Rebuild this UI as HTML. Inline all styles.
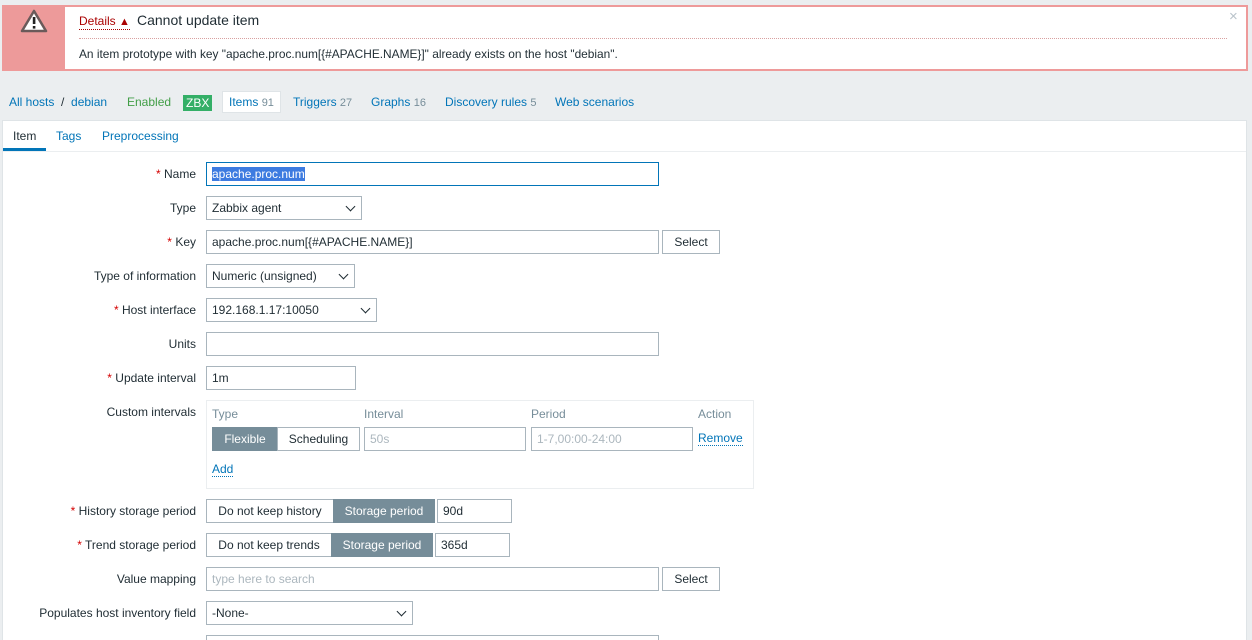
<!DOCTYPE html>
<html style="height:640px;overflow:hidden"><head><style>
*{box-sizing:border-box;margin:0;padding:0}
body{width:1252px;height:640px;overflow:hidden;background:#ebeef0;font:12px "Liberation Sans",Arial,sans-serif;color:#1f2c33;position:relative}
.a{position:absolute;white-space:nowrap}
a,.lk{color:#0275b8;text-decoration:none}
.lbl{position:absolute;right:1056px;white-space:nowrap;line-height:14px}
.req:before{content:"* ";color:#d40000}
.in{position:absolute;height:24px;border:1px solid #a9b5bd;background:#fff;padding:0 5px;line-height:22px;white-space:nowrap;overflow:hidden}
.sel:after{content:"";position:absolute;right:7px;top:6px;width:6px;height:6px;border-right:1px solid #1f2c33;border-bottom:1px solid #1f2c33;transform:rotate(45deg)}
.btn{position:absolute;height:24px;border:1px solid #a9b5bd;background:#fff;line-height:22px;text-align:center;white-space:nowrap}
.on{background:#768d99;color:#fff;border-color:#768d99}
.gr{color:#768d99}
</style></head><body>
<div class="a" style="left:2px;top:5px;width:1246px;height:66px;border:2px solid #ee9a9a;background:#fff"></div>
<div class="a" style="left:3px;top:6px;width:62px;height:64px;background:#ed9a9a"></div>
<svg class="a" style="left:20px;top:9px" width="28" height="24" viewBox="0 0 28 24"><path d="M14 2 L26 22 L2 22 Z" fill="#fff" stroke="#6a5a5a" stroke-width="2.5" stroke-linejoin="round"/><rect x="12.8" y="8" width="2.6" height="7" fill="#222"/><rect x="12.8" y="17" width="2.6" height="2.6" fill="#222"/></svg>
<div class="a" style="left:79px;top:14px;color:#a00;border-bottom:1px dotted #a00;line-height:14px">Details <span style="font-size:11px">▲</span></div>
<div class="a" style="left:137px;top:12px;font-size:14px;color:#1f2c33">Cannot update item</div>
<div class="a" style="left:79px;top:38px;width:1148px;border-top:1px dotted #d9a0a0"></div>
<div class="a" style="left:79px;top:47px;font-size:11.9px">An item prototype with key "apache.proc.num[{#APACHE.NAME}]" already exists on the host "debian".</div>
<div class="a" style="left:1229px;top:8px;color:#b9c3ca;font-size:15px">×</div>

<div class="a" style="left:9px;top:95px"><a>All hosts</a> &nbsp;/&nbsp; <a>debian</a></div>
<div class="a" style="left:127px;top:95px;color:#429e47">Enabled</div>
<div class="a" style="left:183px;top:95px;height:16px;background:#34af67;color:#fff;padding:0 3px;line-height:16px">ZBX</div>
<div class="a" style="left:222px;top:91px;width:59px;height:22px;background:#fff;border:1px solid #dfe4e7"></div>
<div class="a" style="left:229px;top:95px"><a>Items</a> <span class="gr" style="font-size:11px">91</span></div>
<div class="a" style="left:293px;top:95px"><a>Triggers</a> <span class="gr" style="font-size:11px">27</span></div>
<div class="a" style="left:371px;top:95px"><a>Graphs</a> <span class="gr" style="font-size:11px">16</span></div>
<div class="a" style="left:445px;top:95px"><a>Discovery rules</a> <span class="gr" style="font-size:11px">5</span></div>
<div class="a" style="left:555px;top:95px"><a>Web scenarios</a></div>

<div class="a" style="left:2px;top:120px;width:1245px;height:520px;background:#fff;border:1px solid #dfe4e7;border-bottom:none"></div>
<div class="a" style="left:3px;top:151px;width:1243px;border-top:1px solid #ebeef0"></div>
<div class="a" style="left:13px;top:129px">Item</div>
<div class="a" style="left:3px;top:148px;width:43px;height:3px;background:#0275b8"></div>
<div class="a lk" style="left:56px;top:129px">Tags</div>
<div class="a lk" style="left:102px;top:129px">Preprocessing</div>

<div class="lbl req" style="top:167px">Name</div>
<div class="in" style="left:206px;top:162px;width:453px;border-color:#0275b8"><span style="background:#3d7be0;color:#fff">apache.proc.num</span></div>
<div class="lbl" style="top:201px">Type</div>
<div class="in sel" style="left:206px;top:196px;width:156px">Zabbix agent</div>
<div class="lbl req" style="top:235px">Key</div>
<div class="in" style="left:206px;top:230px;width:453px">apache.proc.num[{#APACHE.NAME}]</div>
<div class="btn" style="left:662px;top:230px;width:58px">Select</div>
<div class="lbl" style="top:269px">Type of information</div>
<div class="in sel" style="left:206px;top:264px;width:149px">Numeric (unsigned)</div>
<div class="lbl req" style="top:303px">Host interface</div>
<div class="in sel" style="left:206px;top:298px;width:171px">192.168.1.17:10050</div>
<div class="lbl" style="top:337px">Units</div>
<div class="in" style="left:206px;top:332px;width:453px"></div>
<div class="lbl req" style="top:371px">Update interval</div>
<div class="in" style="left:206px;top:366px;width:150px">1m</div>
<div class="lbl" style="top:405px">Custom intervals</div>
<div class="a" style="left:206px;top:400px;width:548px;height:89px;border:1px solid #ebeef0"></div>
<div class="a gr" style="left:212px;top:407px">Type</div>
<div class="a gr" style="left:364px;top:407px">Interval</div>
<div class="a gr" style="left:531px;top:407px">Period</div>
<div class="a gr" style="left:698px;top:407px">Action</div>
<div class="btn on" style="left:212px;top:427px;width:66px">Flexible</div>
<div class="btn" style="left:277px;top:427px;width:83px">Scheduling</div>
<div class="in" style="left:364px;top:427px;width:162px;color:#acb7be">50s</div>
<div class="in" style="left:531px;top:427px;width:162px;color:#acb7be">1-7,00:00-24:00</div>
<div class="a lk" style="left:698px;top:432px;border-bottom:1px dotted #0275b8;line-height:13px">Remove</div>
<div class="a lk" style="left:212px;top:463px;border-bottom:1px dotted #0275b8;line-height:13px">Add</div>

<div class="lbl req" style="top:504px">History storage period</div>
<div class="btn" style="left:206px;top:499px;width:128px">Do not keep history</div>
<div class="btn on" style="left:333px;top:499px;width:102px">Storage period</div>
<div class="in" style="left:437px;top:499px;width:75px">90d</div>
<div class="lbl req" style="top:538px">Trend storage period</div>
<div class="btn" style="left:206px;top:533px;width:126px">Do not keep trends</div>
<div class="btn on" style="left:331px;top:533px;width:102px">Storage period</div>
<div class="in" style="left:435px;top:533px;width:75px">365d</div>
<div class="lbl" style="top:572px">Value mapping</div>
<div class="in" style="left:206px;top:567px;width:453px;color:#acb7be">type here to search</div>
<div class="btn" style="left:662px;top:567px;width:58px">Select</div>
<div class="lbl" style="top:606px">Populates host inventory field</div>
<div class="in sel" style="left:206px;top:601px;width:207px">-None-</div>
<div class="a" style="left:206px;top:635px;width:453px;height:5px;border:1px solid #a9b5bd;border-bottom:none;background:#fff"></div>
</body></html>
